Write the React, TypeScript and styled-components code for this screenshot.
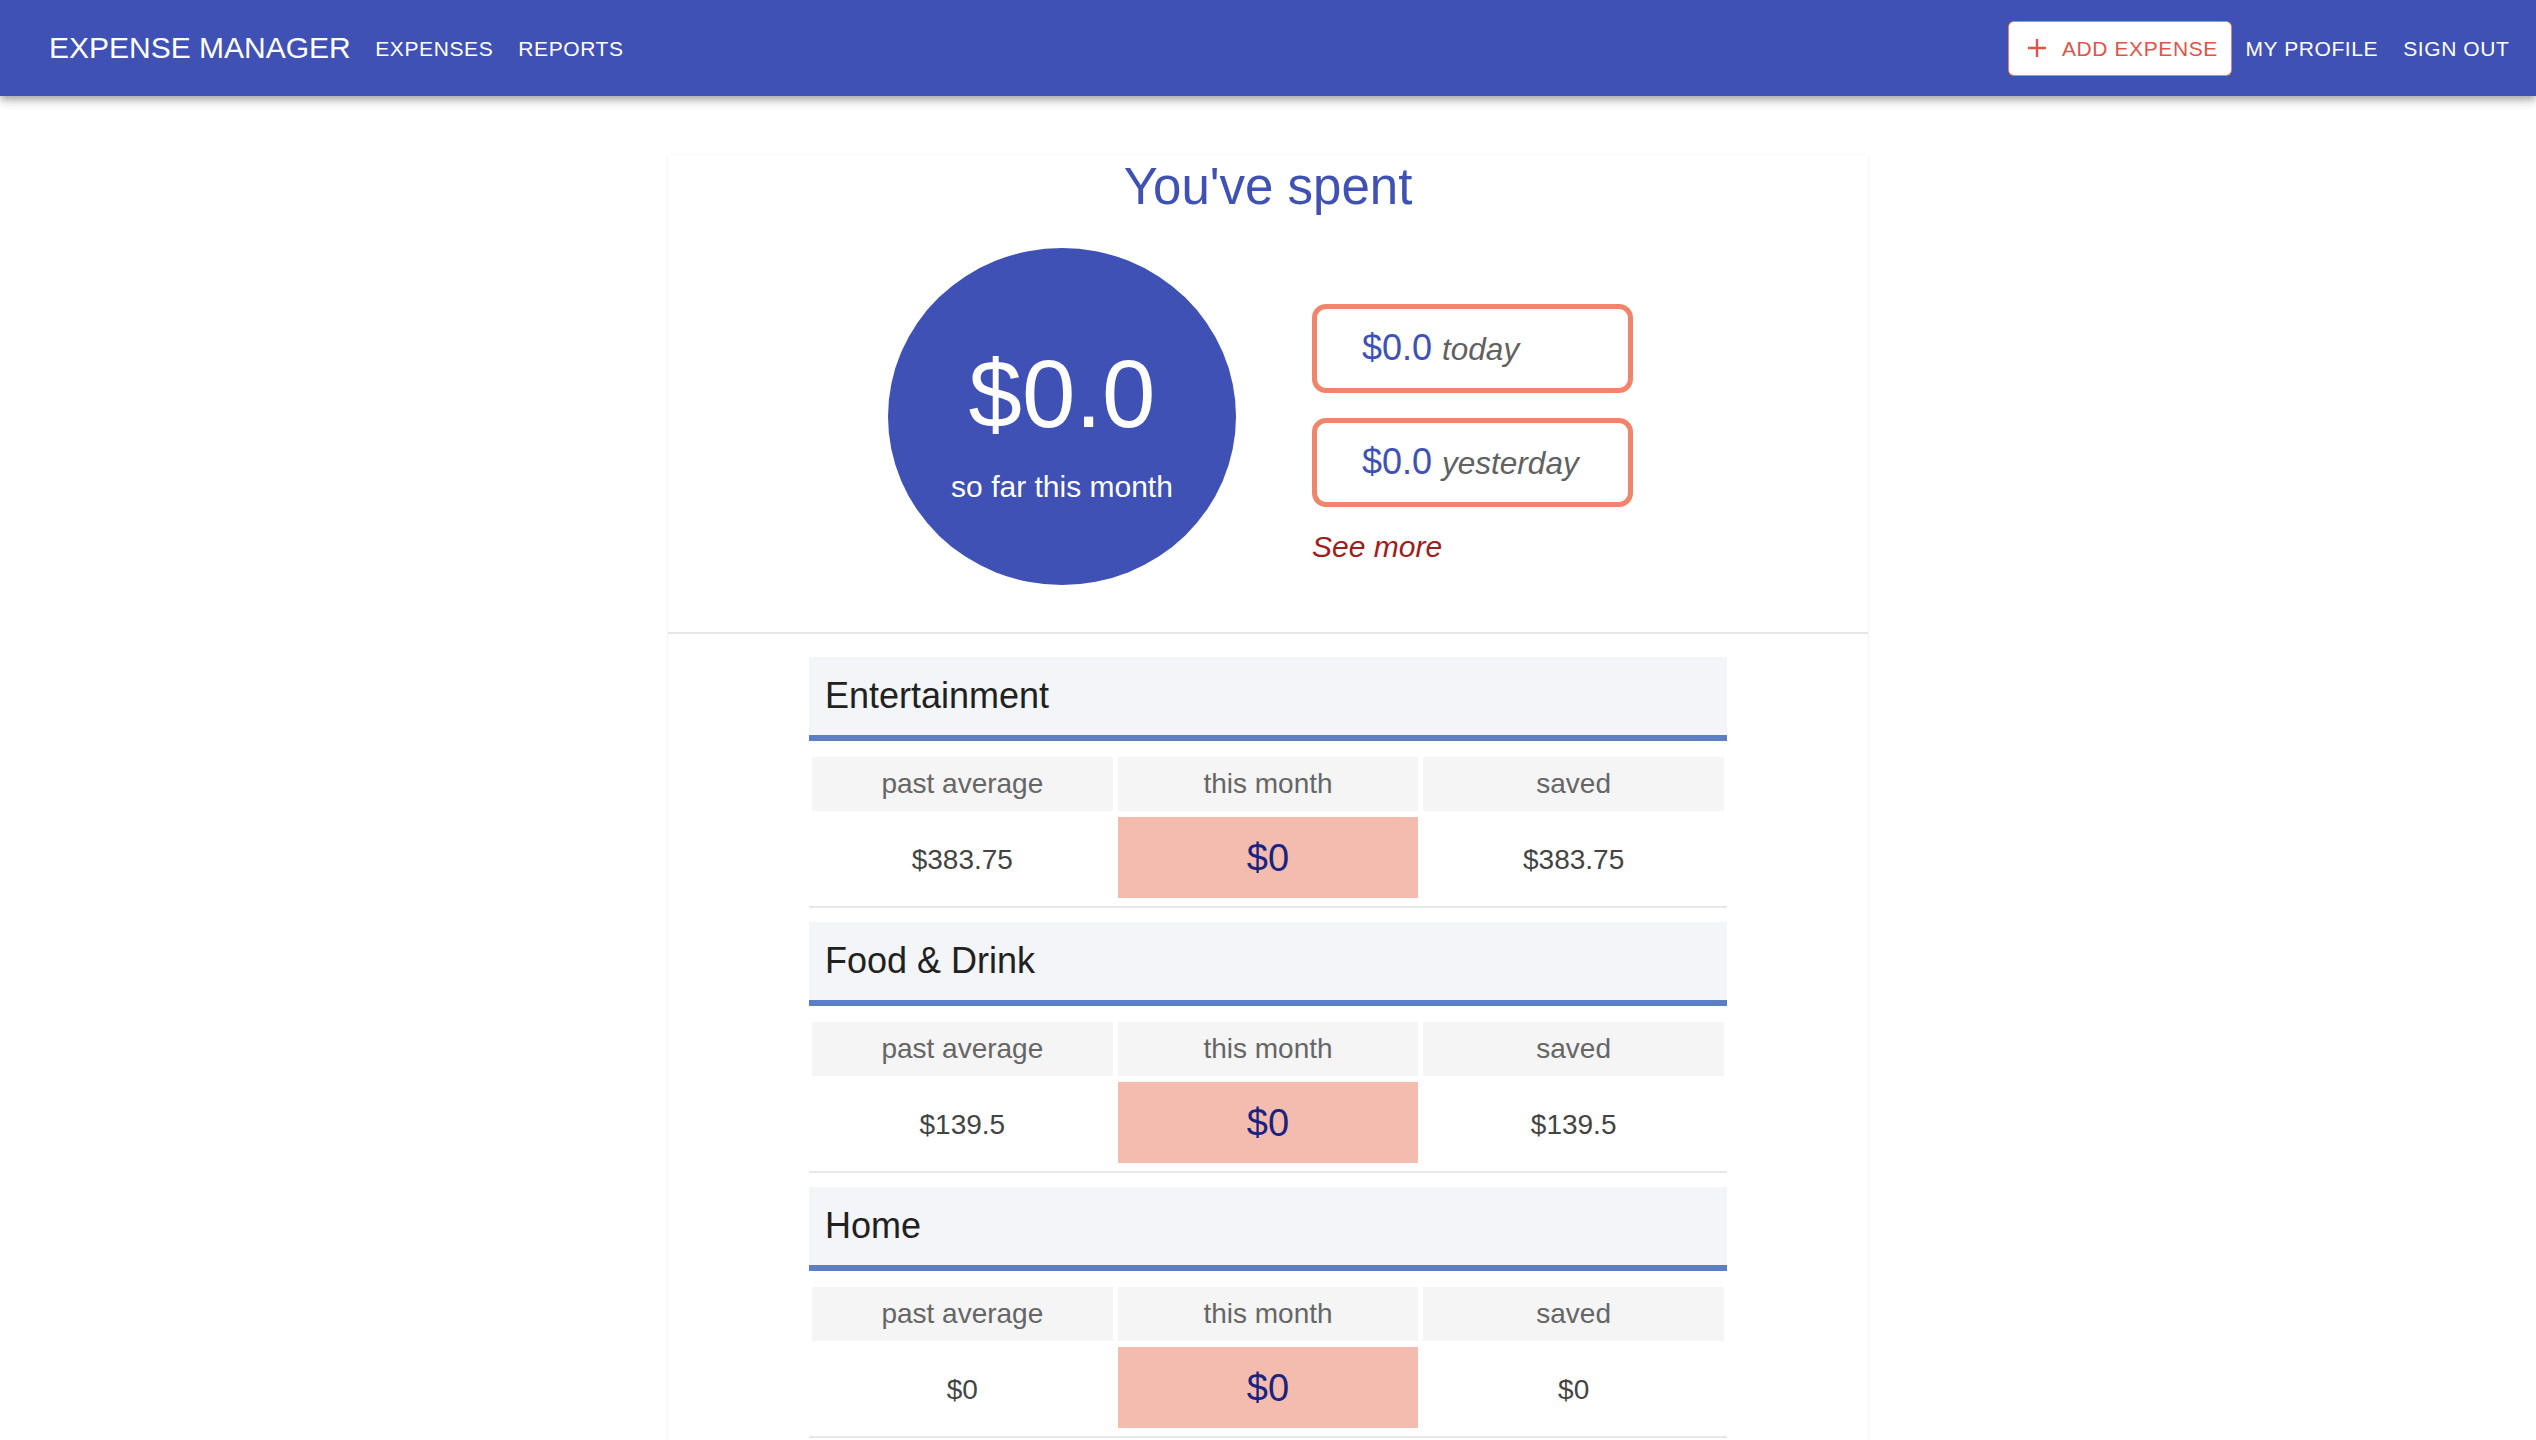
import React from 'react';
import styled, { createGlobalStyle } from 'styled-components';

const GlobalStyle = createGlobalStyle`
  html, body { margin: 0; padding: 0; background: #fff; }
  body { font-family: "Liberation Sans", Arial, sans-serif; }
  * { box-sizing: border-box; }
`;

const AppBar = styled.header`
  position: relative;
  z-index: 2;
  height: 96px;
  background: #3f51b5;
  color: #fff;
  display: flex;
  align-items: center;
  padding: 0 14px 0 37px;
  box-shadow: 0 3px 6px -1px rgba(0, 0, 0, 0.2), 0 6px 8px 0 rgba(0, 0, 0, 0.14),
    0 1px 15px 0 rgba(0, 0, 0, 0.12);
`;

const Brand = styled.div`
  font-size: 30px;
  line-height: 1;
  padding: 0 12px;
  text-transform: uppercase;
  white-space: nowrap;
`;

const NavButton = styled.div`
  font-size: 21px;
  letter-spacing: 0.6px;
  line-height: 1;
  padding: 0 12.5px;
  height: 54px;
  display: flex;
  align-items: center;
  text-transform: uppercase;
  white-space: nowrap;
`;

const Spacer = styled.div`
  flex: 1;
`;

const AddButton = styled.div`
  height: 55px;
  display: flex;
  align-items: center;
  gap: 14px;
  padding: 0 13px 0 17px;
  margin-right: 1px;
  background: #fff;
  border: 1.5px solid rgba(224, 83, 74, 0.75);
  border-radius: 6px;
  color: #e0534a;
  font-size: 21px;
  letter-spacing: 0.6px;
  line-height: 1;
  text-transform: uppercase;
  white-space: nowrap;
`;

const Main = styled.main`
  padding-top: 59px;
`;

const Card = styled.section`
  width: 1200px;
  margin: 0 auto;
  background: #fff;
  box-shadow: 0 2px 1px -1px rgba(0, 0, 0, 0.12), 0 1px 1px 0 rgba(0, 0, 0, 0.08),
    0 1px 3px 0 rgba(0, 0, 0, 0.08);
`;

const Title = styled.h1`
  margin: 0;
  font-size: 51px;
  line-height: 63px;
  font-weight: 400;
  color: #3f51b5;
  text-align: center;
`;

const SummaryRow = styled.div`
  display: flex;
  justify-content: center;
  align-items: flex-start;
  gap: 76px;
  padding: 30px 15px 47px 0;
`;

const Circle = styled.div`
  width: 348px;
  height: 337px;
  border-radius: 50%;
  background: #3f51b5;
  color: #fff;
  display: flex;
  flex-direction: column;
  align-items: center;
  padding-top: 98px;
`;

const BigAmount = styled.div`
  font-size: 96px;
  line-height: 96px;
`;

const CircleCaption = styled.div`
  margin-top: 30px;
  font-size: 30px;
  line-height: 30px;
`;

const SideColumn = styled.div`
  margin-top: 56px;
  display: flex;
  flex-direction: column;
  gap: 25px;
`;

const DayBox = styled.div`
  width: 321px;
  height: 89px;
  border: 5px solid #f0856c;
  border-radius: 14px;
  display: flex;
  align-items: center;
  padding-left: 45px;
`;

const DayText = styled.div`
  font-size: 36px;
  line-height: 36px;
  white-space: nowrap;
`;

const DayAmount = styled.span`
  color: #3f51b5;
`;

const DayLabel = styled.span`
  margin-left: 10px;
  font-size: 31.5px;
  font-style: italic;
  color: #616161;
`;

const SeeMore = styled.div`
  font-size: 30px;
  line-height: 30px;
  font-style: italic;
  color: #a01d1d;
`;

const Categories = styled.div`
  border-top: 2px solid #e6e6e6;
  padding: 23px 0 20px;
  display: flex;
  flex-direction: column;
  align-items: center;
  gap: 14px;
`;

const Category = styled.div`
  width: 918px;
  padding-bottom: 8px;
  border-bottom: 2px solid #e8e8e8;
`;

const CategoryHeader = styled.div`
  height: 84px;
  background: #f4f5f9;
  border-bottom: 6px solid #5b7fc2;
  display: flex;
  align-items: center;
  padding-left: 16px;
  font-size: 36px;
  line-height: 36px;
  color: #212121;
`;

const StatGrid = styled.div`
  margin-top: 16px;
  display: grid;
  grid-template-columns: repeat(3, 1fr);
  column-gap: 5px;
  row-gap: 6px;
  padding: 0 3px;
`;

const HeadCell = styled.div`
  height: 54px;
  background: #f5f5f5;
  display: flex;
  align-items: center;
  justify-content: center;
  font-size: 28px;
  line-height: 28px;
  color: #666;
`;

const ValueCell = styled.div<{ $highlight?: boolean }>`
  height: 81px;
  display: flex;
  align-items: center;
  justify-content: center;
  background: ${(p) => (p.$highlight ? '#f4bcaf' : 'transparent')};
  color: ${(p) => (p.$highlight ? '#1a237e' : '#444')};
  font-size: ${(p) => (p.$highlight ? '38px' : '28px')};
  line-height: ${(p) => (p.$highlight ? '38px' : '28px')};
  padding-top: ${(p) => (p.$highlight ? '0' : '5px')};
`;

const PlusIcon = () => (
  <svg width="22" height="22" viewBox="0 0 22 22" aria-hidden="true">
    <path d="M11 2v18M2 11h18" stroke="#e0534a" strokeWidth="2.4" fill="none" />
  </svg>
);

type CategoryData = { name: string; average: string; month: string; saved: string };

const categories: CategoryData[] = [
  { name: 'Entertainment', average: '$383.75', month: '$0', saved: '$383.75' },
  { name: 'Food & Drink', average: '$139.5', month: '$0', saved: '$139.5' },
  { name: 'Home', average: '$0', month: '$0', saved: '$0' },
];

export default function App() {
  return (
    <>
      <GlobalStyle />
      <AppBar>
        <Brand>Expense Manager</Brand>
        <NavButton>Expenses</NavButton>
        <NavButton>Reports</NavButton>
        <Spacer />
        <AddButton>
          <PlusIcon />
          Add Expense
        </AddButton>
        <NavButton>My Profile</NavButton>
        <NavButton>Sign Out</NavButton>
      </AppBar>
      <Main>
        <Card>
          <Title>You've spent</Title>
          <SummaryRow>
            <Circle>
              <BigAmount>$0.0</BigAmount>
              <CircleCaption>so far this month</CircleCaption>
            </Circle>
            <SideColumn>
              <DayBox>
                <DayText>
                  <DayAmount>$0.0</DayAmount>
                  <DayLabel>today</DayLabel>
                </DayText>
              </DayBox>
              <DayBox>
                <DayText>
                  <DayAmount>$0.0</DayAmount>
                  <DayLabel>yesterday</DayLabel>
                </DayText>
              </DayBox>
              <SeeMore>See more</SeeMore>
            </SideColumn>
          </SummaryRow>
          <Categories>
            {categories.map((c) => (
              <Category key={c.name}>
                <CategoryHeader>{c.name}</CategoryHeader>
                <StatGrid>
                  <HeadCell>past average</HeadCell>
                  <HeadCell>this month</HeadCell>
                  <HeadCell>saved</HeadCell>
                  <ValueCell>{c.average}</ValueCell>
                  <ValueCell $highlight>{c.month}</ValueCell>
                  <ValueCell>{c.saved}</ValueCell>
                </StatGrid>
              </Category>
            ))}
          </Categories>
        </Card>
      </Main>
    </>
  );
}
